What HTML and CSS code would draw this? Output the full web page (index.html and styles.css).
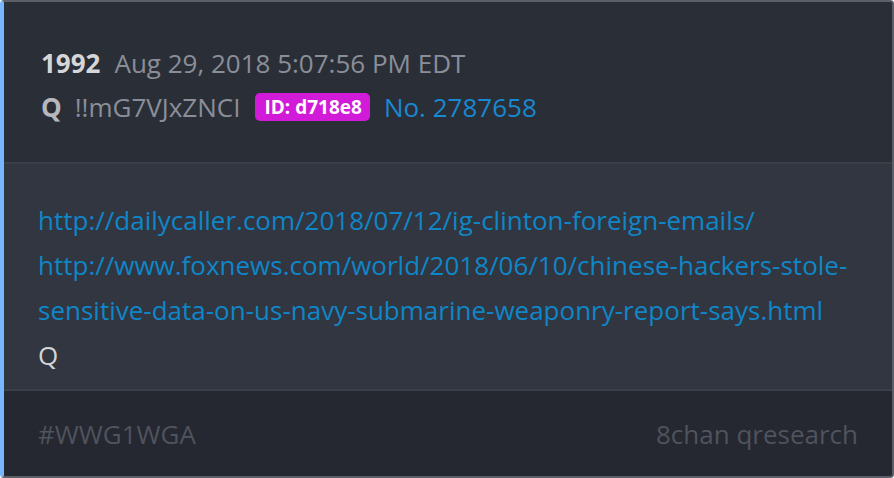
FILE: index.html
```html
<!DOCTYPE html>
<html lang="en">
<head>
  <meta charset="UTF-8" />
  <title>Q Drop 1992</title>
  <link rel="stylesheet" href="styles.css">
</head>
<body>
  <div class="post-card">
    <div class="post-header">
      <div class="meta-line">
        <span class="post-num">1992</span>
        <span class="post-date">Aug 29, 2018 5:07:56 PM EDT</span>
      </div>
      <div class="meta-line">
        <span class="author">Q</span>
        <span class="tripcode">!!mG7VJxZNCI</span>
        <span class="id-badge">ID: d718e8</span>
        <a class="post-link" href="#">No. 2787658</a>
      </div>
    </div>

    <div class="post-body">
      <a href="#">http://dailycaller.com/2018/07/12/ig-clinton-foreign-emails/</a><br>
      <a href="#">http://www.foxnews.com/world/2018/06/10/chinese-hackers-stole-sensitive-data-on-us-navy-submarine-weaponry-report-says.html</a><br>
      Q
    </div>

    <div class="post-footer">
      <span>#WWG1WGA</span>
      <span>8chan qresearch</span>
    </div>
  </div>
</body>
</html>
```

FILE: styles.css
```css
html, body {
  margin: 0;
  padding: 0;
  background: #ffffff;
}

body {
  font-family: "Open Sans", "Noto Sans", sans-serif;
  font-size: 26px;
}

.post-card {
  box-sizing: border-box;
  height: 478px;
  display: flex;
  flex-direction: column;
  border: 2px solid #5b5f68;
  border-left: 4px solid #78b6ff;
  border-radius: 4px;
  overflow: hidden;
  background: #2a2e37;
}

.post-header {
  padding: 39px 34px 33px 37px;
  background: #2a2e37;
  border-bottom: 2px solid #3b3f48;
}

.meta-line {
  line-height: 44px;
  display: flex;
  align-items: center;
  white-space: nowrap;
}

.post-num {
  font-weight: 700;
  color: #d6d6d8;
  margin-right: 14px;
}

.post-date {
  color: #8a8e99;
}

.author {
  font-weight: 700;
  color: #b6b8bd;
  margin-right: 13px;
}

.tripcode {
  color: #8a8e99;
  margin-right: 15px;
}

.id-badge {
  background: #d21bd8;
  color: #ffffff;
  font-weight: 700;
  font-size: 19px;
  line-height: 28px;
  padding: 0 8px 0 9px;
  border-radius: 5px;
  margin-right: 14px;
}

.post-link {
  color: #1888d0;
  text-decoration: none;
}

.post-body {
  flex: 1;
  padding: 34px 34px 0 34px;
  background: #313640;
  color: #d2d4d8;
  line-height: 45px;
  border-bottom: 2px solid #3b3f48;
}

.post-body a {
  color: #0f86c8;
  text-decoration: none;
}

.post-footer {
  height: 85px;
  display: flex;
  align-items: center;
  justify-content: space-between;
  padding: 0 34px 0 34px;
  background: #252830;
  color: #4f535e;
}
```
